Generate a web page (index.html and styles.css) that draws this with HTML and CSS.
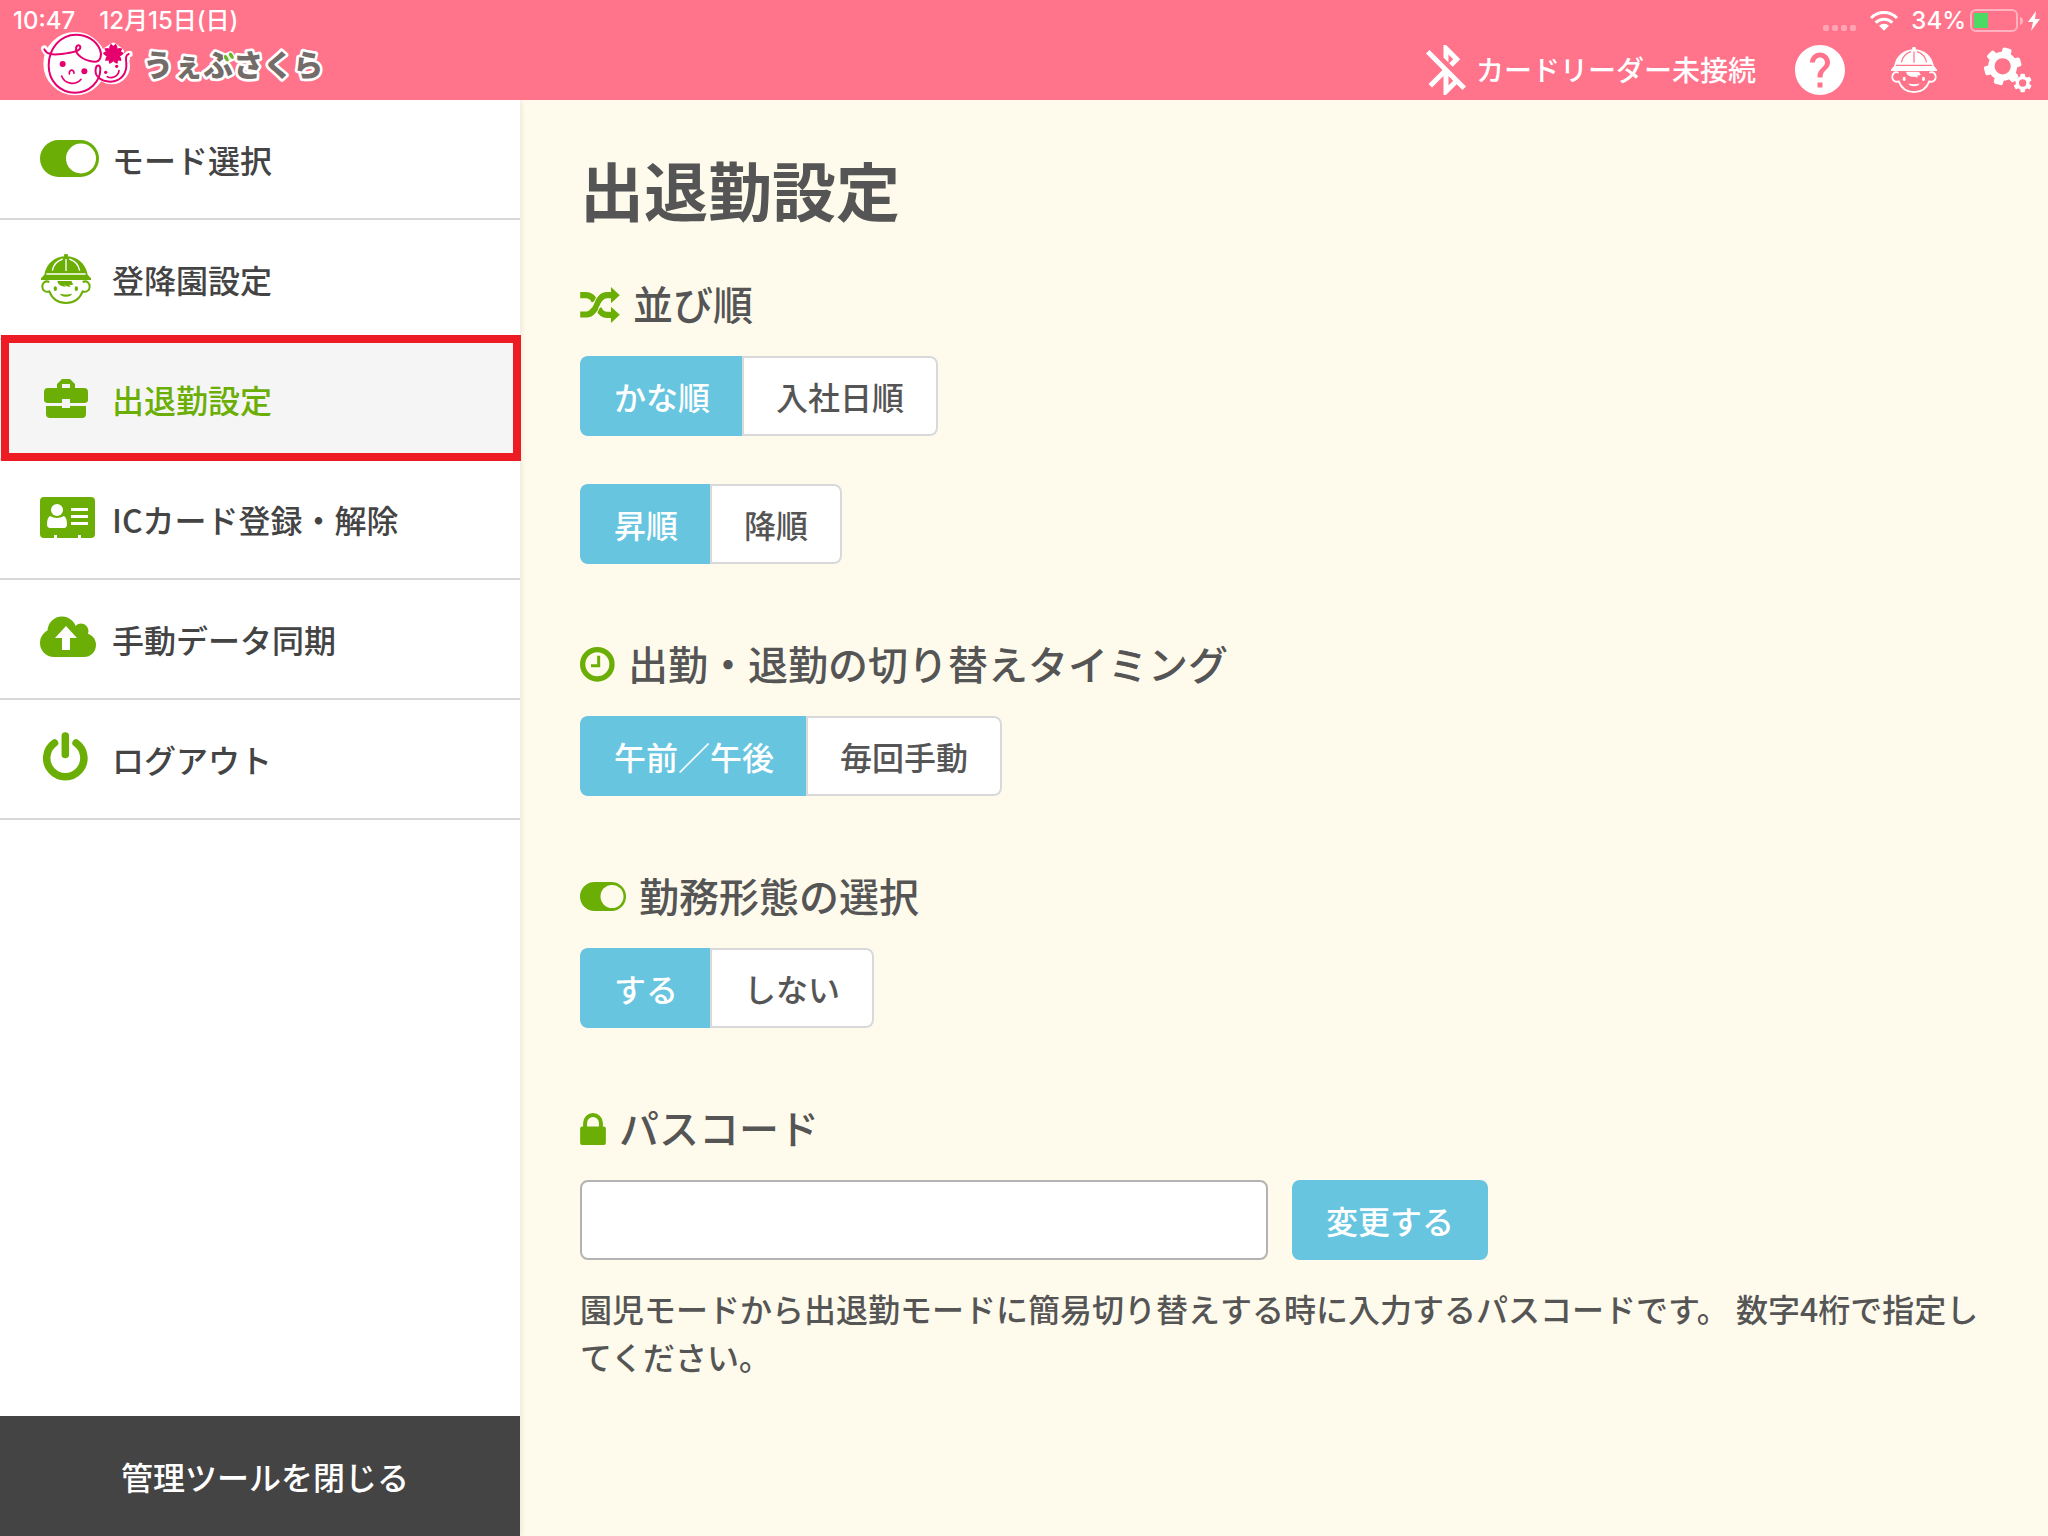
FILE: index.html
```
<!DOCTYPE html>
<html lang="ja">
<head>
<meta charset="utf-8">
<meta name="viewport" content="width=device-width, initial-scale=1">
<title>出退勤設定 - うぇぶさくら</title>
<link rel="stylesheet" href="styles.css">
</head>
<body>
<svg class="defs" aria-hidden="true">
  <symbol id="child" viewBox="0 0 150 150">
    <circle cx="75" cy="5" r="6"/>
    <path d="M10 62C16 28 42 7 75 7s59 21 65 55l10 11v5H0v-5z"/>
    <path class="cut" d="M75 15v36M34 50c3-17 13-29 31-35M116 50c-3-17-13-29-31-35"/>
    <path class="cut" d="M16 60h118" stroke-width="5"/>
    <path class="line" d="M25 84C12 78 4 88 4 98c0 12 11 18 21 14 9 23 27 35 50 35s41-12 50-35c10 4 21-2 21-14 0-10-8-20-21-14"/>
    <path d="M49 81c1 10 11 17 26 17l-7-7c7 6 13 8 21 8l-5-7c5 2 9 1 14-2-4-2-6-5-6-9z"/>
    <ellipse cx="43" cy="104" rx="5" ry="7"/>
    <ellipse cx="106" cy="104" rx="5" ry="7"/>
    <path d="M57 119c10 3 26 3 36 0-2 12-34 12-36 0z"/>
  </symbol>
</svg>

<header class="top">
  <div class="status">
    <div class="status-left"><span>10:47</span><span>12月15日(日)</span></div>
    <div class="status-right">
      <svg class="dots" width="34" height="22" viewBox="0 0 34 22"><g fill="#fff" opacity=".35"><rect y="15" width="6" height="6" rx="2"/><rect x="9" y="15" width="6" height="6" rx="2"/><rect x="18" y="15" width="6" height="6" rx="2"/><rect x="27" y="15" width="6" height="6" rx="2"/></g></svg>
      <svg class="wifi" width="28" height="22" viewBox="0 0 84 66"><g fill="none" stroke="#fff" stroke-width="9"><path d="M3 24C25 2 59 2 81 24"/><path d="M17 38c14-14 36-14 50 0"/></g><path fill="#fff" d="M42 62 27 47c8-8 22-8 30 0z"/></svg>
      <span class="percent">34%</span>
      <svg width="54" height="24" viewBox="0 0 54 24"><rect x="1" y="1" width="46" height="21" rx="5" fill="none" stroke="#fff" stroke-opacity=".45" stroke-width="2"/><path d="M50 8c4 1 4 7 0 8z" fill="#fff" opacity=".45"/><rect x="4" y="4" width="14" height="15" fill="#4cd964"/></svg>
      <svg width="12" height="22" viewBox="0 0 12 22"><path fill="#fff" d="M8 1 0 12h5L3 21l9-12H7z"/></svg>
    </div>
  </div>
  <div class="bar">
    <a class="logo" href="#">
      <svg width="285" height="64" viewBox="120 96 855 192" role="img" aria-label="うぇぶさくら">
        <g fill="#fff" stroke="#fff" stroke-width="20" stroke-linejoin="round" stroke-linecap="round">
          <circle cx="225" cy="191" r="85"/>
          <circle cx="335" cy="198" r="45"/>
          <path d="M133 146c6 14 14 18 30 18M388 162c-6 0-10 5-8 14M340 138l22 16-4 24h-40l-2-24z"/>
        </g>
        <g fill="none" stroke="#e5006e" stroke-width="6" stroke-linecap="round">
          <path d="M133 148c8 16 26 17 52 14 34-4 56-8 56-20 0-9-12-9-13 4-2 20 28 38 55 39 18 1 24-18 17-36-12-28-40-45-72-45-48 0-82 43-82 92 0 48 34 82 79 82 44 0 76-34 76-70 0-16-12-15-14-1-4 20 14 38 44 38 34 0 50-28 48-54-2-18-2-26 7-29"/>
          <path d="M208 222c-2-14 14-16 14-2M185 228c8 24 42 30 58 10M322 230c13 7 33 0 35-18" stroke-width="5"/>
        </g>
        <g fill="#e5006e">
          <circle cx="188" cy="192" r="9"/><circle cx="253" cy="214" r="9"/><circle cx="317" cy="217" r="5"/><circle cx="350" cy="199" r="5"/>
          <g transform="translate(340 162)">
            <path id="petal" d="M0 0C-14-8-16-20-7-31l7 7 7-7c9 11 7 23-7 31z"/>
            <use href="#petal" transform="rotate(72)"/><use href="#petal" transform="rotate(144)"/><use href="#petal" transform="rotate(216)"/><use href="#petal" transform="rotate(288)"/>
          </g>
        </g>
        <text class="logo-text" x="430" y="229">うぇぶさくら</text>
        <g fill="#6bb42c" stroke="#fff" stroke-width="3"><ellipse cx="679" cy="175" rx="7" ry="12" transform="rotate(-30 679 175)"/><ellipse cx="694" cy="167" rx="7" ry="12" transform="rotate(-30 694 167)"/></g>
      </svg>
    </a>
    <div class="tools">
      <div class="reader">
        <svg width="60" height="60" viewBox="0 0 24 24" fill="#fff"><path d="M13 5.83l1.88 1.88-1.6 1.6 1.41 1.41 3.02-3.02L12 2h-1v5.03l2 2v-3.2zM5.41 4L4 5.41 10.59 12 5 17.59 6.41 19 11 14.41V22h1l4.29-4.29 2.3 2.29L20 18.59 5.41 4zM13 18.17v-3.76l1.88 1.88L13 18.17z"/></svg>
        <span>カードリーダー未接続</span>
      </div>
      <button type="button" aria-label="ヘルプ"><svg width="60" height="60" viewBox="0 0 24 24" fill="#fff"><path d="M12 2C6.48 2 2 6.48 2 12s4.48 10 10 10 10-4.48 10-10S17.52 2 12 2zm1 17h-2v-2h2v2zm2.07-7.75l-.9.92C13.45 12.9 13 13.5 13 15h-2v-.5c0-1.1.45-2.1 1.17-2.83l1.24-1.26c.37-.36.59-.86.59-1.41 0-1.1-.9-2-2-2s-2 .9-2 2H8c0-2.21 1.79-4 4-4s4 1.79 4 4c0 .88-.36 1.68-.93 2.25z"/></svg></button>
      <button type="button" aria-label="園児モード"><svg class="child on-pink" width="60" height="60" viewBox="0 0 60 60"><use href="#child" x="7" y="7" width="46" height="46"/></svg></button>
      <button type="button" aria-label="設定">
        <svg width="60" height="60" viewBox="714 120 180 180" fill="#fff">
          <g transform="translate(788 199)">
            <circle r="34" fill="none" stroke="#fff" stroke-width="19"/>
            <g id="teeth"><rect x="-14" y="-56" width="28" height="26" rx="6" transform="rotate(15)"/><rect x="-14" y="-56" width="28" height="26" rx="6" transform="rotate(75)"/><rect x="-14" y="-56" width="28" height="26" rx="6" transform="rotate(135)"/><rect x="-14" y="-56" width="28" height="26" rx="6" transform="rotate(195)"/><rect x="-14" y="-56" width="28" height="26" rx="6" transform="rotate(255)"/><rect x="-14" y="-56" width="28" height="26" rx="6" transform="rotate(315)"/></g>
          </g>
          <g transform="translate(848 249)"><circle r="16" fill="none" stroke="#fff" stroke-width="10"/><use href="#teeth" transform="rotate(-15) scale(.49)"/></g>
        </svg>
      </button>
    </div>
  </div>
</header>

<div class="body">
  <aside class="side">
    <nav class="menu">
      <a href="#"><svg class="icon" viewBox="0 0 60 56"><rect y="9" width="59" height="37" rx="18.500"/><circle cx="41" cy="27.500" r="15" fill="#fff"/></svg>モード選択</a>
      <a href="#"><svg class="icon child" viewBox="0 0 60 56"><use href="#child" x="1" y="3" width="50" height="50"/></svg>登降園設定</a>
      <a href="#" class="current" aria-current="page"><svg class="icon" viewBox="0 0 60 56"><path fill-rule="evenodd" d="M17 17v-4l5-5h8l5 5v4h9q4 0 4 4v8q0 3-4 3H30v-4h-8v4H8q-4 0-4-3v-8q0-4 4-4zM22 17h8v-4h-8zM6 35h16v2h8v-2h16v8q0 4-4 4H10q-4 0-4-4z"/></svg>出退勤設定</a>
      <a href="#"><svg class="icon" viewBox="0 0 60 56"><path d="M4 6h47q4 0 4 4v33q0 4-4 4H41v-3h-3v3H17v-3h-3v3H4q-4 0-4-4V10q0-4 4-4z"/><g fill="#fff"><circle cx="17" cy="19" r="6"/><path d="M10 25q7 4 14 0 3 2 3 8 0 4-3 4H10q-3 0-3-4 0-6 3-8zM31 17h17v3H31zM31 24h17v3H31zM31 31h17v3H31z"/></g></svg>ICカード登録・解除</a>
      <a href="#"><svg class="icon" viewBox="0 0 60 56"><circle cx="22" cy="20" r="14.500"/><circle cx="41" cy="20" r="7.500"/><circle cx="14" cy="32" r="14"/><circle cx="44" cy="34" r="12"/><path d="M14 20h30v26H14z"/><path fill="#fff" d="M26 15l11 12h-7v12h-8V27h-7z"/></svg>手動データ同期</a>
      <a href="#"><svg class="icon" viewBox="0 0 60 56"><path fill="none" stroke="currentColor" stroke-width="7.500" stroke-linecap="round" d="M14.500 12a18.600 18.600 0 1 0 21.600 0M25.300 5v18.500"/></svg>ログアウト</a>
    </nav>
    <button type="button" class="close">管理ツールを閉じる</button>
  </aside>

  <main class="main">
    <h1>出退勤設定</h1>

    <section>
      <h2 id="t-order"><svg width="40" height="36" viewBox="0 0 121 110"><g fill="none" stroke="#6bae06" stroke-width="19"><path d="M0 25h18c14 0 20 6 26 18M56 66c8 16 16 19 26 19h16"/><path d="M0 84h20C52 84 48 25 82 25h16"/></g><path fill="none" stroke="#fffbec" stroke-width="3" d="M34 65c8-12 10-26 19-38M50 80c8-12 10-26 19-38"/><path fill="#6bae06" d="M94 0l27 25-27 25zM94 60l27 25-27 25z"/></svg>並び順</h2>
      <div class="choices" role="radiogroup" aria-labelledby="t-order">
        <label><input type="radio" name="key" checked><span>かな順</span></label>
        <label><input type="radio" name="key"><span>入社日順</span></label>
      </div>
      <div class="choices" role="radiogroup" aria-labelledby="t-order">
        <label><input type="radio" name="dir" checked><span>昇順</span></label>
        <label><input type="radio" name="dir"><span>降順</span></label>
      </div>
    </section>

    <section>
      <h2 id="t-timing"><svg width="35" height="35" viewBox="0 0 105 105"><g fill="none" stroke="#6bae06"><circle cx="52" cy="52" r="44" stroke-width="16"/><path d="M56 26v30H33" stroke-width="9"/></g></svg>出勤・退勤の切り替えタイミング</h2>
      <div class="choices" role="radiogroup" aria-labelledby="t-timing">
        <label><input type="radio" name="timing" checked><span>午前／午後</span></label>
        <label><input type="radio" name="timing"><span>毎回手動</span></label>
      </div>
    </section>

    <section>
      <h2 id="t-style"><svg width="46" height="29" viewBox="0 0 46 29"><rect width="46" height="29" rx="14.500" fill="#6bae06"/><circle cx="32" cy="14.500" r="11.500" fill="#fffbec"/></svg>勤務形態の選択</h2>
      <div class="choices" role="radiogroup" aria-labelledby="t-style">
        <label><input type="radio" name="style" checked><span>する</span></label>
        <label><input type="radio" name="style"><span>しない</span></label>
      </div>
    </section>

    <section>
      <h2><svg width="26" height="32" viewBox="0 0 78 97"><rect y="41" width="78" height="56" rx="6" fill="#6bae06"/><path d="M15 46V30a24 24 0 0 1 48 0v16" fill="none" stroke="#6bae06" stroke-width="12"/></svg><label for="passcode">パスコード</label></h2>
      <div class="passcode">
        <input id="passcode" type="text" inputmode="numeric" maxlength="4">
        <button type="button">変更する</button>
      </div>
      <p>園児モードから出退勤モードに簡易切り替えする時に入力するパスコードです。 数字4桁で指定してください。</p>
    </section>
  </main>
</div>
</body>
</html>
```
FILE: styles.css
```
* { box-sizing: border-box; }

body {
  margin: 0;
  min-height: 100vh;
  display: flex;
  flex-direction: column;
  background: #fffbec;
  color: #555;
  font-family: "Noto Sans CJK JP", sans-serif;
  font-size: 32px;
  font-weight: 500;
  line-height: 48px;
}

svg { display: block; flex: none; }
button { border: 0; padding: 0; background: none; font: inherit; color: inherit; cursor: pointer; }
.defs { position: absolute; width: 0; height: 0; }

/* header */
.top { background: #ff738b; color: #fff; }
.status {
  display: flex;
  justify-content: space-between;
  align-items: center;
  height: 40px;
  padding: 2px 8px 0 13px;
  font: 500 24px/38px Inter, "Noto Sans CJK JP", sans-serif;
}
.status-left { display: flex; gap: 24px; }
.status-right { display: flex; align-items: center; }
.dots, .wifi { margin-right: 13px; }
.percent { margin-right: 4px; }
.status-right svg:last-child { margin-left: 4px; }

.bar { display: flex; justify-content: space-between; height: 60px; padding: 0 10px 0 40px; }
.logo { margin-top: -8px; }
.logo-text {
  font: 900 90px "Noto Sans CJK JP", sans-serif;
  fill: #746c68;
  stroke: #fff;
  stroke-width: 16px;
  stroke-linejoin: round;
  paint-order: stroke;
}
.tools { display: flex; gap: 34px; }
.reader { display: flex; align-items: center; font-size: 28px; line-height: 42px; }
.reader span { padding-bottom: 2px; }

.child { --cut: #fff; fill: currentColor; stroke: none; }
.on-pink { --cut: #ff738b; color: #fff; }
.cut { fill: none; stroke: var(--cut); stroke-width: 4px; }
.line { fill: none; stroke: currentColor; stroke-width: 6px; }

/* side menu */
.body { flex: 1; display: flex; }
.side {
  position: relative;
  z-index: 1;
  flex: none;
  width: 520px;
  display: flex;
  flex-direction: column;
  justify-content: space-between;
  background: #fff;
  box-shadow: 0 0 6px rgba(0, 0, 0, .12);
  clip-path: inset(0 -10px 0 0);
}
.menu a {
  position: relative;
  display: flex;
  align-items: center;
  gap: 12px;
  height: 120px;
  padding-left: 40px;
  border-bottom: 2px solid #d9d9d9;
  color: #444;
  text-decoration: none;
}
.icon { width: 60px; height: 56px; fill: currentColor; color: #6bae06; }
.menu .current { background: #f5f5f5; color: #6bae06; }
.current::after {
  content: "";
  position: absolute;
  inset: -5px -1px -3px 1px;
  z-index: 1;
  border: 8px solid #ed1c24;
}
.close { height: 120px; padding-left: 10px; background: #444; color: #fff; }

/* settings */
.main { flex: 1; min-width: 0; padding: 48px 60px 0; }
h1 { margin: 0 0 44px; font-size: 64px; line-height: 80px; font-weight: 700; }
h2 {
  display: flex;
  align-items: center;
  gap: 13px;
  margin: 0 0 24px;
  padding-top: 2px;
  font-size: 40px;
  line-height: 58px;
  font-weight: 500;
}
h2 svg { margin-top: 3px; }
section { margin-bottom: 68px; }
p { margin: 24px 0 0; }

.choices { display: flex; width: max-content; }
.choices + .choices { margin-top: 48px; }
.choices label { position: relative; display: block; cursor: pointer; }
.choices input { position: absolute; inset: 0; margin: 0; opacity: 0; }
.choices span {
  display: block;
  padding: 14px 32px;
  border: 2px solid #d9d9d9;
  background: #fff;
}
.choices label:first-child span { border-right: 0; border-radius: 8px 0 0 8px; }
.choices label:last-child span { border-radius: 0 8px 8px 0; }
.choices input:checked + span { background: #68c5df; border-color: #68c5df; color: #fff; }

.passcode { display: flex; gap: 24px; }
.passcode input {
  width: 50%;
  max-width: 688px;
  height: 80px;
  padding: 0 24px;
  border: 2px solid #b3b3b3;
  border-radius: 8px;
  background: #fff;
  font: inherit;
  color: inherit;
}
.passcode button { padding: 16px 34px; border-radius: 8px; background: #68c5df; color: #fff; }
```
